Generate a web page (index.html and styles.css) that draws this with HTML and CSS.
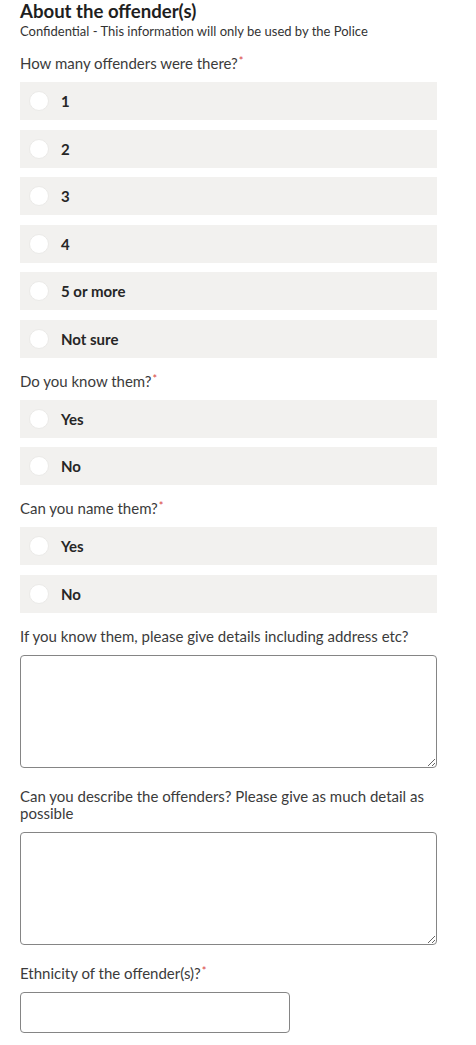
FILE: index.html
```html
<!DOCTYPE html>
<html lang="en">
<head>
<meta charset="utf-8">
<title>About the offender(s)</title>
<link rel="stylesheet" href="styles.css">
</head>
<body>
<form class="form">
  <header class="head">
    <h1 class="title">About the offender(s)</h1>
    <p class="subtitle">Confidential - This information will only be used by the Police</p>
  </header>

  <fieldset class="field field-radio">
    <legend class="label">How many offenders were there?<span class="req">*</span></legend>
    <div class="options">
      <label class="option"><input type="radio" name="count"><span>1</span></label>
      <label class="option"><input type="radio" name="count"><span>2</span></label>
      <label class="option"><input type="radio" name="count"><span>3</span></label>
      <label class="option"><input type="radio" name="count"><span>4</span></label>
      <label class="option"><input type="radio" name="count"><span>5 or more</span></label>
      <label class="option"><input type="radio" name="count"><span>Not sure</span></label>
    </div>
  </fieldset>

  <fieldset class="field field-radio">
    <legend class="label">Do you know them?<span class="req">*</span></legend>
    <div class="options">
      <label class="option"><input type="radio" name="know"><span>Yes</span></label>
      <label class="option"><input type="radio" name="know"><span>No</span></label>
    </div>
  </fieldset>

  <fieldset class="field field-radio">
    <legend class="label">Can you name them?<span class="req">*</span></legend>
    <div class="options">
      <label class="option"><input type="radio" name="name"><span>Yes</span></label>
      <label class="option"><input type="radio" name="name"><span>No</span></label>
    </div>
  </fieldset>

  <div class="field field-text">
    <label class="label" for="details">If you know them, please give details including address etc?</label>
    <textarea id="details" class="textarea"></textarea>
  </div>

  <div class="field field-text">
    <label class="label" for="describe">Can you describe the offenders? Please give as much detail as possible</label>
    <textarea id="describe" class="textarea"></textarea>
  </div>

  <div class="field">
    <label class="label" for="ethnicity">Ethnicity of the offender(s)?<span class="req">*</span></label>
    <input id="ethnicity" class="input" type="text">
  </div>
</form>
</body>
</html>
```

FILE: styles.css
```css
* { box-sizing: border-box; }

html, body {
  margin: 0;
  padding: 0;
  background: #ffffff;
}

body {
  font-family: Lato, "Open Sans", "Liberation Sans", sans-serif;
  color: #3b3b3b;
}

.form {
  width: 417px;
  margin-left: 20px;
  display: flex;
  flex-direction: column;
}

.head {
  margin-bottom: 16px;
}

.title {
  margin: 0;
  font-size: 18.6px;
  line-height: 22px;
  font-weight: 700;
  color: #1f1f1f;
}

.subtitle {
  margin: 0;
  padding-top: 1px;
  font-size: 13px;
  line-height: 16px;
  color: #333333;
}

.field {
  border: 0;
  margin: 0;
  padding: 0;
  min-width: 0;
}

.field-radio {
  margin-bottom: 15px;
}

.field-text {
  margin-bottom: 20px;
}

.label {
  display: block;
  padding: 0;
  margin: 0 0 10px;
  font-size: 15px;
  line-height: 17px;
  color: #3b3b3b;
}

.req {
  color: #d9463f;
  font-size: 11px;
  vertical-align: top;
  line-height: 12px;
  margin-left: 1px;
}

.options {
  display: flex;
  flex-direction: column;
  gap: 9.5px;
}

.option {
  display: flex;
  align-items: center;
  height: 38px;
  padding-left: 9px;
  background: #f2f1ef;
  font-size: 15px;
  font-weight: 700;
  color: #262626;
  cursor: pointer;
}

.option input {
  appearance: none;
  -webkit-appearance: none;
  margin: 0 12px 0 0;
  width: 20px;
  height: 20px;
  border-radius: 50%;
  background: #ffffff;
  border: 1px solid #ebeae8;
}

.textarea {
  display: block;
  width: 417px;
  height: 113px;
  margin: 0;
  border: 1px solid #858585;
  border-radius: 4px;
  padding: 6px 8px;
  font-family: inherit;
  font-size: 15px;
  background: #ffffff;
}

.input {
  display: block;
  width: 270px;
  height: 41px;
  margin: 0;
  border: 1px solid #858585;
  border-radius: 4px;
  padding: 6px 8px;
  font-family: inherit;
  font-size: 15px;
  background: #ffffff;
}
```
